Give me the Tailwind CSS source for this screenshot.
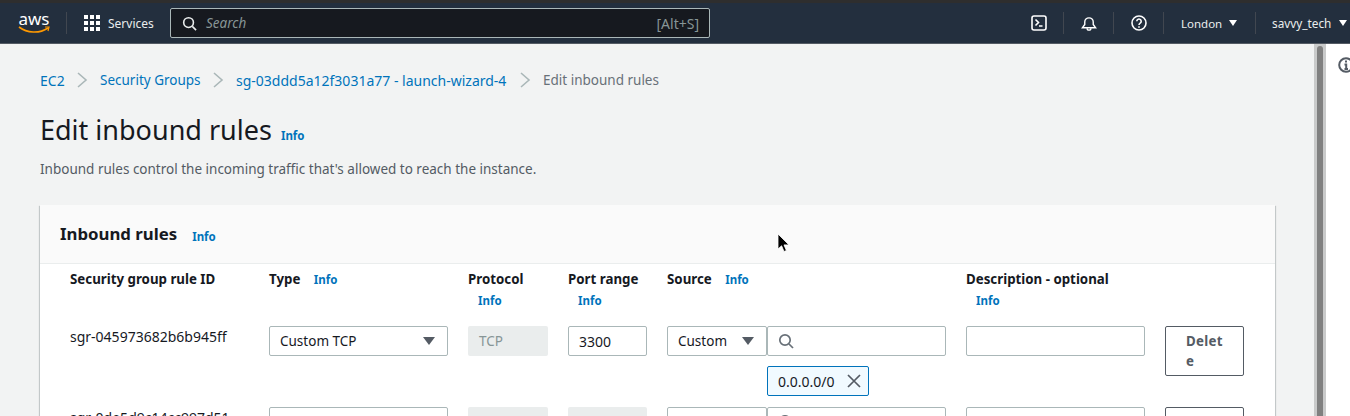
<!DOCTYPE html>
<html lang="en">
<head>
    <meta charset="UTF-8">
    <title>Edit inbound rules</title>
    <script src="https://cdn.jsdelivr.net/npm/@tailwindcss/browser@4"></script>
</head>
<body class="h-[416px] overflow-hidden bg-white font-['Noto_Sans',sans-serif] text-[13.5px] text-[#16191f]">

<!-- top nav -->
<div class="h-[3px] bg-[#2e2e2e]"></div>
<nav class="flex h-[41px] items-center border-b border-[#545b64] bg-[#232f3e] text-[11.5px] text-[#eaeded]">
    <div class="ml-[18px] flex w-[32px] flex-col items-center">
        <span class="text-[17px] leading-[14px] text-white">aws</span>
        <svg width="32" height="8" viewBox="0 0 32 8"><path d="M1 1c8 6 20 7 29 1" fill="none" stroke="#f90" stroke-width="1.6"/><path d="M27 1l4 0-1 4" fill="none" stroke="#f90" stroke-width="1.2"/></svg>
    </div>
    <div class="ml-[16px] h-[22px] w-px bg-[#414750]"></div>
    <div class="ml-[17px] grid grid-cols-3 gap-[2px]">
        <i class="size-[4px] bg-white"></i><i class="size-[4px] bg-white"></i><i class="size-[4px] bg-white"></i>
        <i class="size-[4px] bg-white"></i><i class="size-[4px] bg-white"></i><i class="size-[4px] bg-white"></i>
        <i class="size-[4px] bg-white"></i><i class="size-[4px] bg-white"></i><i class="size-[4px] bg-white"></i>
    </div>
    <span class="ml-[8px] w-[45px] pt-px text-[12px]">Services</span>
    <div class="ml-[17px] flex h-[30px] w-[540px] items-center rounded-[2px] border border-[#aab7b8] bg-[#16191f] pl-[11px] pr-[10px]">
        <svg width="15" height="15" viewBox="0 0 16 16" fill="none" stroke="#eaeded" stroke-width="1.7"><circle cx="7" cy="7" r="5.2"/><path d="M11 11l4 4"/></svg>
        <span class="ml-[9px] text-[13.5px] italic text-[#879596]">Search</span>
        <span class="ml-auto text-[14px] text-[#879596]">[Alt+S]</span>
    </div>
    <svg class="ml-[321px]" width="16" height="16" viewBox="0 0 16 16" fill="none" stroke="#fff" stroke-width="1.6"><rect x="1" y="1" width="14" height="14" rx="2"/><path d="M4.5 4.5L7.5 7.5L4.5 10.5M8 11h3.5"/></svg>
    <div class="ml-[16px] h-[22px] w-px bg-[#414750]"></div>
    <svg class="ml-[17px]" width="16" height="17" viewBox="0 0 17 17" fill="none" stroke="#fff" stroke-width="1.5"><path d="M1.5 13h14l-2.5-3.5V7a4.5 4.5 0 0 0-9 0v2.5z"/><path d="M6.5 13.5a2 2 0 0 0 4 0"/></svg>
    <div class="ml-[16px] h-[22px] w-px bg-[#414750]"></div>
    <svg class="ml-[17px]" width="16" height="16" viewBox="0 0 16 16" fill="none" stroke="#fff" stroke-width="1.6"><circle cx="8" cy="8" r="7"/><path d="M5.8 6.2a2.2 2.2 0 1 1 3.4 1.9c-.8.5-1.2 1-1.2 1.9"/><path d="M8 11.2v1.6"/></svg>
    <div class="ml-[16px] h-[22px] w-px bg-[#414750]"></div>
    <span class="ml-[17px] w-[41px] pt-px">London</span>
    <span class="ml-[7px] size-0 border-x-[4px] border-t-[6px] border-x-transparent border-t-white"></span>
    <div class="ml-[18px] h-[22px] w-px bg-[#414750]"></div>
    <span class="ml-[16px] w-[61px] pt-px text-[11.8px]">savvy_tech</span>
    <span class="ml-[6px] size-0 border-x-[4px] border-t-[6px] border-x-transparent border-t-white"></span>
</nav>

<div class="flex h-[372px]">
    <main class="w-[1314px] shrink-0 overflow-hidden bg-[#f2f3f3] pl-[40px] pr-[39px]">
        <!-- breadcrumbs -->
        <div class="mt-[26px] flex h-[20px] items-center whitespace-nowrap text-[#0073bb]">
            <span class="w-[24px] text-[14px]">EC2</span>
            <svg class="mx-[12px]" width="12" height="16" viewBox="0 0 12 16" fill="none" stroke="#aab7b8" stroke-width="1.6"><path d="M2 1l8 7-8 7"/></svg>
            <span class="w-[100px]">Security Groups</span>
            <svg class="mx-[12px]" width="12" height="16" viewBox="0 0 12 16" fill="none" stroke="#aab7b8" stroke-width="1.6"><path d="M2 1l8 7-8 7"/></svg>
            <span class="w-[271px] text-[14px]">sg-03ddd5a12f3031a77 - launch-wizard-4</span>
            <svg class="mx-[12px]" width="12" height="16" viewBox="0 0 12 16" fill="none" stroke="#aab7b8" stroke-width="1.6"><path d="M2 1l8 7-8 7"/></svg>
            <span class="text-[#687078]">Edit inbound rules</span>
        </div>

        <div class="mt-[20px] flex items-baseline">
            <h1 class="text-[27px] leading-[40px] font-normal">Edit inbound rules</h1>
            <span class="ml-[9px] text-[11.5px] font-bold text-[#0073bb]">Info</span>
        </div>
        <p class="mt-[9px] leading-[20px] text-[#545b64]">Inbound rules control the incoming traffic that's allowed to reach the instance.</p>

        <!-- card -->
        <section class="mt-[26px] bg-white shadow-[0_1px_1px_0_rgba(0,28,36,0.3),1px_1px_1px_0_rgba(0,28,36,0.15),-1px_1px_1px_0_rgba(0,28,36,0.15)]">
            <header class="flex h-[59px] items-center border-b border-[#eaeded] bg-[#fafafa] pl-[20px]">
                <h2 class="text-[16.8px] font-bold">Inbound rules</h2>
                <span class="ml-[15px] mt-[5px] text-[11.5px] font-bold text-[#0073bb]">Info</span>
            </header>

            <div class="grid grid-cols-[199px_199px_100px_99px_100px_199px_199px_79px] pl-[30px] pt-[5px] text-[13.3px]">
                <!-- heading row -->
                <div class="h-[57px] font-bold leading-[20px]">Security group rule ID</div>
                <div class="font-bold leading-[20px]">Type <span class="ml-[10px] text-[11.5px] text-[#0073bb]">Info</span></div>
                <div class="font-bold leading-[20px]">Protocol<div class="mt-[2px] pl-[10px] text-[11.5px] text-[#0073bb]">Info</div></div>
                <div class="font-bold leading-[20px]">Port range<div class="mt-[2px] pl-[10px] text-[11.5px] text-[#0073bb]">Info</div></div>
                <div class="font-bold leading-[20px]">Source <span class="ml-[10px] text-[11.5px] text-[#0073bb]">Info</span></div>
                <div></div>
                <div class="font-bold leading-[20px]">Description - optional<div class="mt-[2px] pl-[10px] text-[11.5px] text-[#0073bb]">Info</div></div>
                <div></div>

                <!-- first rule -->
                <div class="h-[81px] pt-px text-[14px] leading-[20px]">sgr-045973682b6b945ff</div>
                <div>
                    <div class="flex h-[30px] w-[179px] items-center justify-between rounded-[2px] border border-[#aab7b8] pl-[10px] pr-[12px] text-[13.5px]">Custom TCP<span class="size-0 border-x-[6px] border-t-[8px] border-x-transparent border-t-[#545b64]"></span></div>
                </div>
                <div><div class="flex h-[30px] w-[80px] items-center rounded-[2px] bg-[#eaeded] pl-[11px] text-[13.5px] text-[#879596]">TCP</div></div>
                <div><div class="flex h-[30px] w-[79px] items-center rounded-[2px] border border-[#aab7b8] pl-[10px] text-[14px]">3300</div></div>
                <div><div class="flex h-[30px] w-[100px] items-center justify-between rounded-[2px] border border-[#aab7b8] pl-[10px] pr-[12px] text-[13.5px]">Custom<span class="size-0 border-x-[6px] border-t-[8px] border-x-transparent border-t-[#545b64]"></span></div></div>
                <div>
                    <div class="flex h-[30px] w-[179px] items-center rounded-[2px] border border-[#aab7b8] pl-[10px]">
                        <svg width="16" height="16" viewBox="0 0 16 16" fill="none" stroke="#687078" stroke-width="1.7"><circle cx="7" cy="7" r="5.2"/><path d="M11 11l4 4"/></svg>
                    </div>
                    <div class="mt-[10px] flex h-[30px] w-[102px] items-center rounded-[2px] border border-[#0073bb] bg-[#f1faff] pl-[10px] text-[14px]">
                        0.0.0.0/0
                        <svg class="ml-[12px]" width="14" height="14" viewBox="0 0 14 14" fill="none" stroke="#545b64" stroke-width="1.7"><path d="M1 1l12 12M13 1L1 13"/></svg>
                    </div>
                </div>
                <div><div class="h-[30px] w-[179px] rounded-[2px] border border-[#aab7b8]"></div></div>
                <div><div class="h-[50px] w-[79px] rounded-[2px] border border-[#545b64] pl-[20px] pr-[14px] pt-[4px] font-bold leading-[20px] tracking-[0.3px] break-all text-[#545b64]">Delete</div></div>

                <!-- second rule, cut off by the window -->
                <div class="pt-px text-[14px] leading-[20px]">sgr-0de5d9c14cc997d51</div>
                <div><div class="h-[30px] w-[179px] rounded-[2px] border border-[#aab7b8]"></div></div>
                <div><div class="h-[30px] w-[80px] rounded-[2px] bg-[#eaeded]"></div></div>
                <div><div class="h-[30px] w-[79px] rounded-[2px] bg-[#eaeded]"></div></div>
                <div><div class="h-[30px] w-[100px] rounded-[2px] border border-[#aab7b8]"></div></div>
                <div>
                    <div class="h-[30px] w-[179px] rounded-[2px] border border-[#aab7b8] pl-[10px] pt-[6px]">
                        <svg width="16" height="16" viewBox="0 0 16 16" fill="none" stroke="#687078" stroke-width="1.7"><circle cx="7" cy="7" r="5.2"/><path d="M11 11l4 4"/></svg>
                    </div>
                </div>
                <div><div class="h-[30px] w-[179px] rounded-[2px] border border-[#aab7b8]"></div></div>
                <div><div class="h-[50px] w-[79px] rounded-[2px] border border-[#545b64]"></div></div>
            </div>
        </section>
    </main>

    <!-- scrollbar -->
    <div class="w-[12px] shrink-0 bg-[#c9caca] px-[3px] pt-[2px]">
        <div class="h-full rounded-t-[3px] bg-[#808080]"></div>
    </div>

    <!-- help panel rail -->
    <aside class="flex-1 bg-white pl-[12px] pt-[13px]">
        <svg width="16" height="16" viewBox="0 0 16 16" fill="none" stroke="#545b64" stroke-width="2"><circle cx="8" cy="8" r="6.8"/><path d="M6.5 7.5H8.2V12M6.5 12h3.5M8 3.6v2"/></svg>
    </aside>
</div>

<!-- mouse pointer -->
<svg class="absolute left-[777px] top-[233px]" width="13" height="20" viewBox="0 0 13 20"><path d="M1 1v15l3.6-3.2 2.4 5.7 2.4-1-2.4-5.6h5z" fill="#000" stroke="#fff" stroke-width="0.8"/></svg>

</body>
</html>
